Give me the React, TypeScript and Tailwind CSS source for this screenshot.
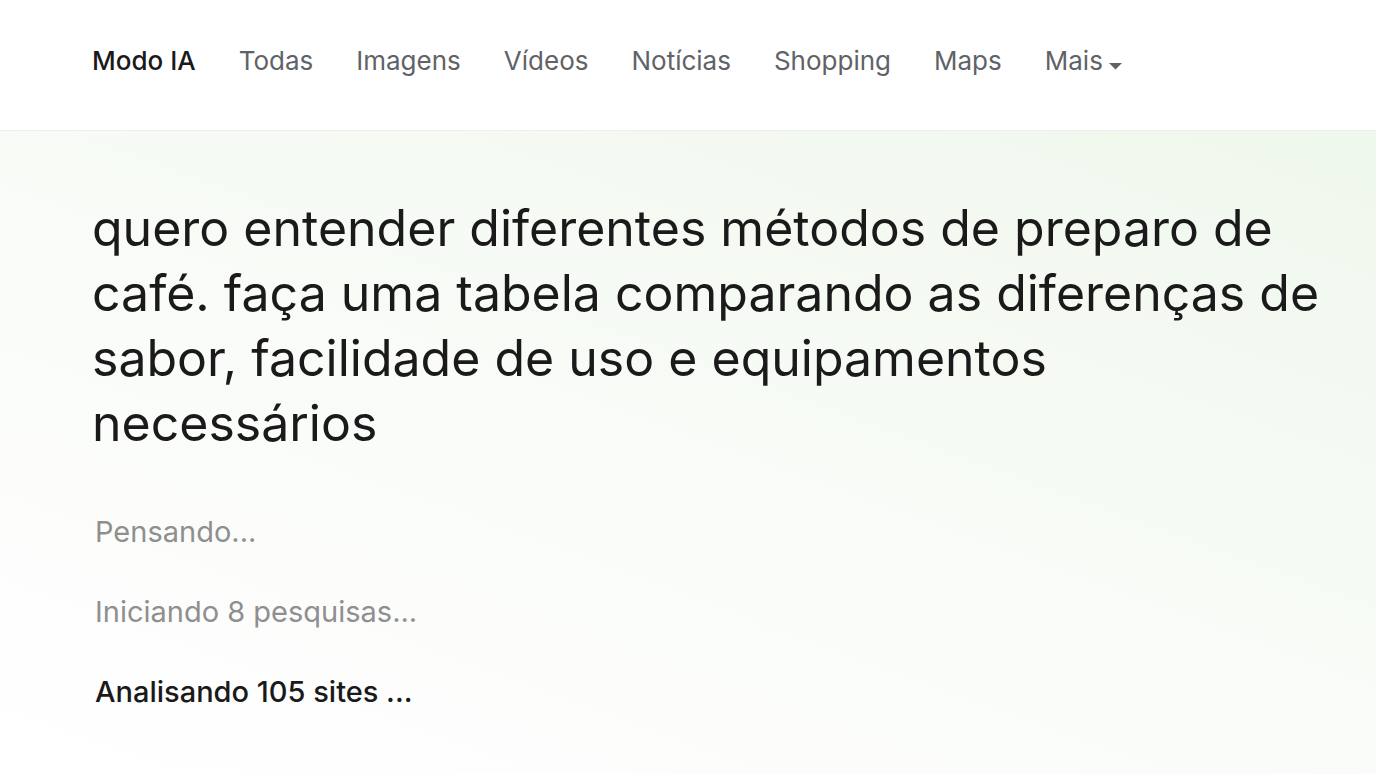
import React from "react";

const tabs = ["Todas", "Imagens", "Vídeos", "Notícias", "Shopping", "Maps"];

export default function App() {
  return (
    <div
      className="w-[1376px] h-[774px] overflow-hidden flex flex-col bg-white"
      style={{ fontFamily: "Inter, 'Noto Sans', sans-serif" }}
    >
      <header className="h-[131px] shrink-0 bg-white border-b border-[#eeeeee] pl-[92px] pt-[48px]">
        <nav className="flex items-start gap-[43px] text-[26px] leading-[26px]">
          <span className="text-[#1a1a1a] font-medium">Modo IA</span>
          {tabs.map((t) => (
            <span key={t} className="text-[#5f6368]">
              {t}
            </span>
          ))}
          <span className="text-[#5f6368] flex items-start gap-[6px]">
            Mais
            <svg width="13" height="7" viewBox="0 0 13 7" className="mt-[15px]">
              <path d="M0 0 L13 0 L6.5 6.5 Z" fill="#5f6368" />
            </svg>
          </span>
        </nav>
      </header>
      <main className="flex-1 bg-[linear-gradient(200deg,#eff8ed_0%,#f5faf3_30%,#fafcf9_60%,#ffffff_100%)] pl-[92px] pr-[34px]">
        <h1 className="mt-[65px] text-[50px] leading-[65px] text-[#1a1a1a] font-normal max-w-[1250px]">
          quero entender diferentes métodos de preparo de café. faça uma tabela comparando as diferenças de sabor, facilidade de uso e equipamentos necessários
        </h1>
        <div className="mt-[60px] pl-[3px] flex flex-col gap-[48px] text-[29px] leading-[32px]">
          <span className="text-[#8f8f8f]">Pensando...</span>
          <span className="text-[#8f8f8f]">Iniciando 8 pesquisas...</span>
          <span className="text-[#1a1a1a] font-medium">Analisando 105 sites ...</span>
        </div>
      </main>
    </div>
  );
}
